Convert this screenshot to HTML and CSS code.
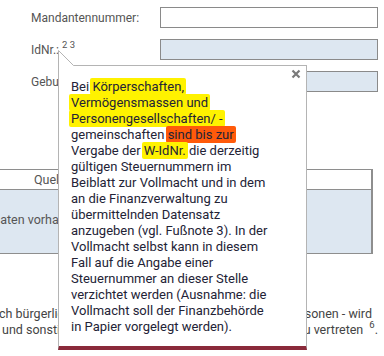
FILE: index.html
```html
<!DOCTYPE html>
<html lang="de">
<head>
  <meta charset="UTF-8" />
  <meta name="viewport" content="width=device-width, initial-scale=1.0" />
  <title>Vollmacht</title>
  <link rel="stylesheet" href="styles.css">
</head>
<body>
  <div class="form">
    <div class="row">
      <label class="label" for="mandant">Mandantennummer:</label>
      <input class="field" id="mandant" type="text">
    </div>
    <div class="row">
      <label class="label" for="idnr">IdNr.:<sup class="ref">2 3</sup></label>
      <input class="field field-locked" id="idnr" type="text" readonly>
    </div>
    <div class="row">
      <label class="label" for="geb">Geburtsdatum:</label>
      <input class="field field-locked" id="geb" type="text" readonly>
    </div>
  </div>

  <div class="grid">
    <div class="grid-head">Quelle</div>
    <div class="grid-body"><span class="empty">Daten vorhanden</span></div>
  </div>

  <div class="notes">
    <div class="notes-line notes-first">
      <span class="notes-start">durch bürgerlichen Rechts</span>
      <span>natürliche Personen - wird</span>
    </div>
    <div class="notes-line">
      <span class="notes-next">und sonstige</span>
      <span>zu vertreten <sup class="ref">6</sup>.</span>
    </div>
  </div>

  <!-- Hilfe-Tooltip zur IdNr. -->
  <div class="tip">
    <svg class="tip-arrow" width="16" height="16" viewBox="0 0 16 16">
      <polygon points="0.5,0.5 15.5,15.5 15.5,16 0.5,16" fill="#fff" />
      <path d="M0.5 16 V0.5 L15.5 15.5" fill="none" stroke="#b4b4b4" stroke-width="1" />
    </svg>
    <svg class="tip-close" width="10" height="10" viewBox="0 0 10 10">
      <path d="M1.5 1.5 L8.5 8.5 M8.5 1.5 L1.5 8.5" stroke="#7a7a7a" stroke-width="2.2" />
    </svg>
    <p class="tip-text">Bei <mark class="hl">Körperschaften,</mark><br>
      <mark class="hl">Vermögensmassen und<br>
      Personengesellschaften/ -</mark><br>
      gemeinschaften <mark class="hl hl-warn">sind bis zur</mark><br>
      Vergabe der <mark class="hl">W-IdNr.</mark> die derzeitig<br>
      gültigen Steuernummern im<br>
      Beiblatt zur Vollmacht und in dem<br>
      an die Finanzverwaltung zu<br>
      übermittelnden Datensatz<br>
      anzugeben (vgl. Fußnote 3). In der<br>
      Vollmacht selbst kann in diesem<br>
      Fall auf die Angabe einer<br>
      Steuernummer an dieser Stelle<br>
      verzichtet werden (Ausnahme: die<br>
      Vollmacht soll der Finanzbehörde<br>
      in Papier vorgelegt werden).</p>
  </div>
</body>
</html>
```

FILE: styles.css
```css
body {
  margin: 0;
  font-family: Roboto, 'Liberation Sans', sans-serif;
  font-size: 12px;
  color: #555;
  background: #fff;
  overflow: hidden;
}

.form {
  padding-top: 7px;
}

.row {
  display: flex;
  align-items: center;
  height: 21px;
  margin-bottom: 11px;
}

.label {
  width: 129px;
  padding-left: 31px;
  font-size: 12px;
  color: #555;
}

.ref {
  font-size: 9.5px;
  margin-left: 3px;
  vertical-align: 6px;
  line-height: 0;
}

.field {
  width: 218px;
  height: 21px;
  box-sizing: border-box;
  border: 1px solid #8a8a8a;
  background: #fff;
  padding: 0 4px;
  margin: 0;
}

.field-locked {
  background: #dde7f1;
}

.grid {
  margin: 77px 11px 0 -2px;
  border: 1px solid #8e8e8e;
  border-right-width: 2px;
}

.grid-head {
  height: 19px;
  line-height: 19px;
  padding-left: 35px;
  border-bottom: 1px solid #8e8e8e;
  font-size: 12.5px;
}

.grid-body {
  height: 63px;
  line-height: 60px;
  background: #dde7f1;
  font-size: 12.5px;
}

.empty {
  margin-left: -7px;
}

.notes {
  margin-top: 52px;
  font-size: 12.5px;
  line-height: 16px;
  color: #444;
}

.notes-line {
  display: flex;
  justify-content: space-between;
  white-space: nowrap;
  padding-right: 6px;
}

.notes-first {
  padding-right: 12px;
}

.notes-start {
  margin-left: -19px;
}

.notes-next {
  margin-left: 2px;
}

.tip {
  position: absolute;
  left: 58px;
  top: 65px;
  width: 249px;
  box-sizing: border-box;
  background: #fff;
  border: 1px solid #b4b4b4;
  border-bottom: 4px solid #8a2a3a;
  padding: 13px 12px 11px 12px;
}

.tip-arrow {
  position: absolute;
  left: -1px;
  top: -16px;
}

.tip-close {
  position: absolute;
  right: 5px;
  top: 3px;
}

.tip-text {
  margin: 0;
  font-size: 13px;
  line-height: 16px;
  color: #232336;
  white-space: nowrap;
}

.hl {
  background: #fff200;
  color: inherit;
  padding: 1px 2px;
  margin: 0 -2px;
  border-radius: 2px;
  -webkit-box-decoration-break: clone;
  box-decoration-break: clone;
}

.hl-warn {
  background: #ff5a0a;
}
```
